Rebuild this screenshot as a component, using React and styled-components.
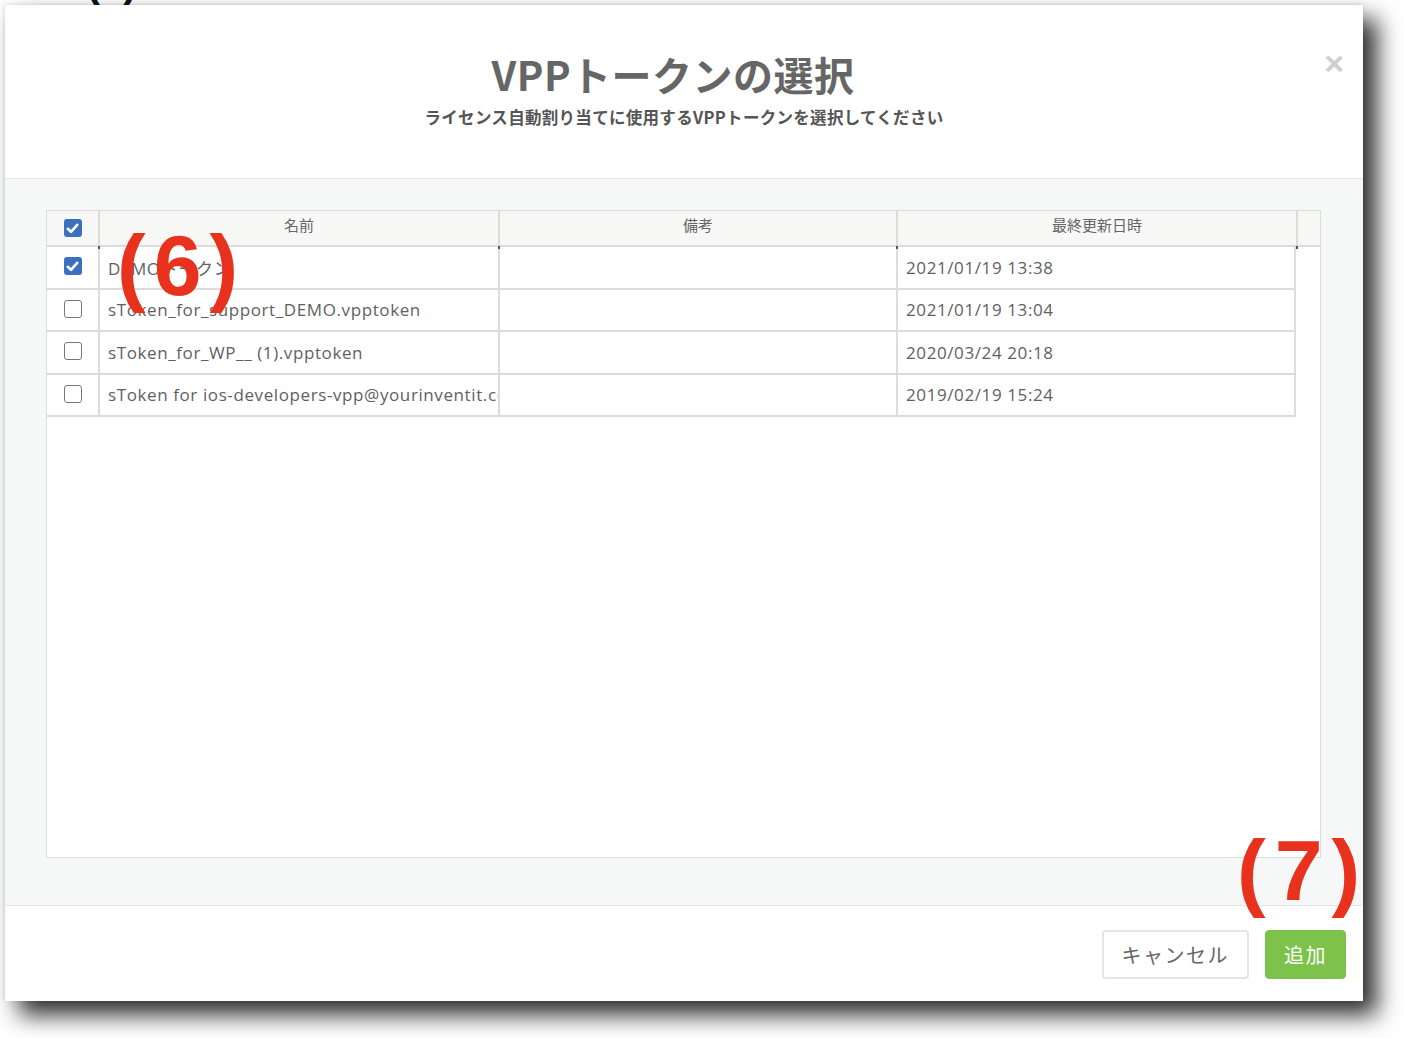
import React from "react";
import styled, { createGlobalStyle } from "styled-components";

const Global = createGlobalStyle`
  html, body { margin: 0; padding: 0; background: #ffffff; }
  body { font-family: "Noto Sans CJK JP", "Noto Sans", sans-serif; }
  * { box-sizing: border-box; }
`;

const Page = styled.div`
  position: relative;
  width: 1404px;
  height: 1038px;
  overflow: hidden;
  padding: 5px 0 0 5px;
  background: #fff;
`;

const Modal = styled.div`
  width: 1358px;
  height: 996px;
  background: #fff;
  display: flex;
  flex-direction: column;
  box-shadow: 14px 14px 22px rgba(0, 0, 0, 0.82), -1px -1px 5px rgba(0, 0, 0, 0.12);
`;

const Header = styled.div`
  position: relative;
  height: 174px;
  flex: none;
  border-bottom: 1px solid #e6e6e6;
  display: flex;
  flex-direction: column;
  align-items: center;
  padding-top: 44px;
`;

const Title = styled.h1`
  margin: 0 22px 0 0;
  font-size: 40px;
  line-height: 50px;
  font-weight: 700;
  color: #666;
  letter-spacing: 0.5px;
`;

const Subtitle = styled.p`
  margin: 6px 0 0;
  font-size: 16.5px;
  line-height: 24px;
  font-weight: 700;
  color: #555;
  letter-spacing: 0.3px;
`;

const Close = styled.span`
  position: absolute;
  right: 19px;
  top: 38px;
  font-size: 34px;
  font-weight: 700;
  color: #cfcfcf;
  font-family: "Liberation Sans", sans-serif;
  line-height: 40px;
`;

const Body = styled.div`
  flex: 1;
  background: #f6f8f7;
  padding: 31px 42px 47px 41px;
  border-bottom: 1px solid #e6e6e6;
  display: flex;
`;

const TableBox = styled.div`
  flex: 1;
  border: 1.5px solid #dcdcdc;
  background: #fff;
  display: flex;
  flex-direction: column;
`;

const HeadRow = styled.div`
  display: grid;
  grid-template-columns: 51px 400px 398px 400px 24px;
  height: 36px;
  background: #f7f7f6;
  border-bottom: 2px solid #dcdcdc;
`;

const HeadCell = styled.div`
  position: relative;
  border-left: ${(p) => (p.$first ? "none" : "2px solid #dcdcdc")};
  display: flex;
  align-items: center;
  justify-content: center;
  font-size: 15px;
  color: #666;
  padding-bottom: ${(p) => (p.$first ? "0" : "8px")};
  &::after {
    content: "";
    display: ${(p) => (p.$mark ? "block" : "none")};
    position: absolute;
    left: -2px;
    bottom: -4px;
    width: 2px;
    height: 3px;
    background: #555;
  }
`;

const Row = styled.div`
  display: grid;
  grid-template-columns: 51px 400px 398px 400px;
  height: 42.5px;
  border-bottom: 2px solid #dcdcdc;
  width: 1249px;
`;

const Cell = styled.div`
  border-left: ${(p) => (p.$first ? "none" : "2px solid #dcdcdc")};
  border-right: ${(p) => (p.$last ? "2px solid #dcdcdc" : "none")};
  display: flex;
  align-items: center;
  justify-content: ${(p) => (p.$center ? "center" : "flex-start")};
  padding: ${(p) => (p.$center ? "0 0 2px 0" : "0 0 0 8px")};
  font-family: "Open Sans", "Noto Sans CJK JP", sans-serif;
  font-size: 17px;
  letter-spacing: 0.6px;
  color: #5f5f5f;
  white-space: nowrap;
  overflow: hidden;
`;

const Check = styled.span`
  width: 18px;
  height: 18px;
  flex: none;
  border-radius: 3px;
  display: inline-flex;
  align-items: center;
  justify-content: center;
  background: ${(p) => (p.$on ? "#3b6fbf" : "#fff")};
  border: ${(p) => (p.$on ? "none" : "1.5px solid #777")};
`;

const Footer = styled.div`
  height: 95px;
  flex: none;
  display: flex;
  justify-content: flex-end;
  align-items: flex-start;
  gap: 16px;
  padding: 24px 17px 0 0;
`;

const Button = styled.button`
  height: 49px;
  padding: 0 ${(p) => p.$pad}px;
  border-radius: 4px;
  font-family: "Noto Sans CJK JP", sans-serif;
  font-size: 20px;
  letter-spacing: 1.5px;
  cursor: pointer;
  border: ${(p) => (p.$primary ? "1px solid #7dc24a" : "2px solid #e4e4e4")};
  background: ${(p) => (p.$primary ? "#7dc24a" : "#fff")};
  color: ${(p) => (p.$primary ? "#fff" : "#666")};
`;

const Note = styled.span`
  position: absolute;
  left: ${(p) => p.$x}px;
  top: ${(p) => p.$y}px;
  font-family: "Liberation Sans", sans-serif;
  font-weight: 700;
  font-size: ${(p) => p.$size}px;
  line-height: 1;
  color: ${(p) => p.$color};
  letter-spacing: ${(p) => p.$ls}px;
`;

const CheckMark = () => (
  <svg width="13" height="11" viewBox="0 0 13 11">
    <path d="M1.8 5.8 L5 8.8 L11.2 1.8" fill="none" stroke="#fff" strokeWidth="2.6" strokeLinecap="round" strokeLinejoin="round" />
  </svg>
);

const rows = [
  { on: true, name: "DEMOトークン", date: "2021/01/19 13:38" },
  { on: false, name: "sToken_for_support_DEMO.vpptoken", date: "2021/01/19 13:04" },
  { on: false, name: "sToken_for_WP__ (1).vpptoken", date: "2020/03/24 20:18" },
  { on: false, name: "sToken for ios-developers-vpp@yourinventit.com.vpptoken", date: "2019/02/19 15:24" },
];

export default function App() {
  return (
    <>
      <Global />
      <Page>
        <Note $x={86} $y={-39} $size={42} $ls={0} $color="#111">(5)</Note>
        <Modal>
          <Header>
            <Title>VPPトークンの選択</Title>
            <Subtitle>ライセンス自動割り当てに使用するVPPトークンを選択してください</Subtitle>
            <Close>×</Close>
          </Header>
          <Body>
            <TableBox>
              <HeadRow>
                <HeadCell $first>
                  <Check $on><CheckMark /></Check>
                </HeadCell>
                <HeadCell $mark>名前</HeadCell>
                <HeadCell $mark>備考</HeadCell>
                <HeadCell $mark>最終更新日時</HeadCell>
                <HeadCell $mark />
              </HeadRow>
              {rows.map((r, i) => (
                <Row key={i}>
                  <Cell $first $center>
                    <Check $on={r.on}>{r.on && <CheckMark />}</Check>
                  </Cell>
                  <Cell>{r.name}</Cell>
                  <Cell />
                  <Cell $last>{r.date}</Cell>
                </Row>
              ))}
            </TableBox>
          </Body>
          <Footer>
            <Button $pad={18}>キャンセル</Button>
            <Button $primary $pad={18}>追加</Button>
          </Footer>
        </Modal>
        <Note $x={117} $y={222} $size={86} $ls={8} $color="#e8321e">(6)</Note>
        <Note $x={1237} $y={827} $size={86} $ls={9} $color="#e8321e">(7)</Note>
      </Page>
    </>
  );
}
